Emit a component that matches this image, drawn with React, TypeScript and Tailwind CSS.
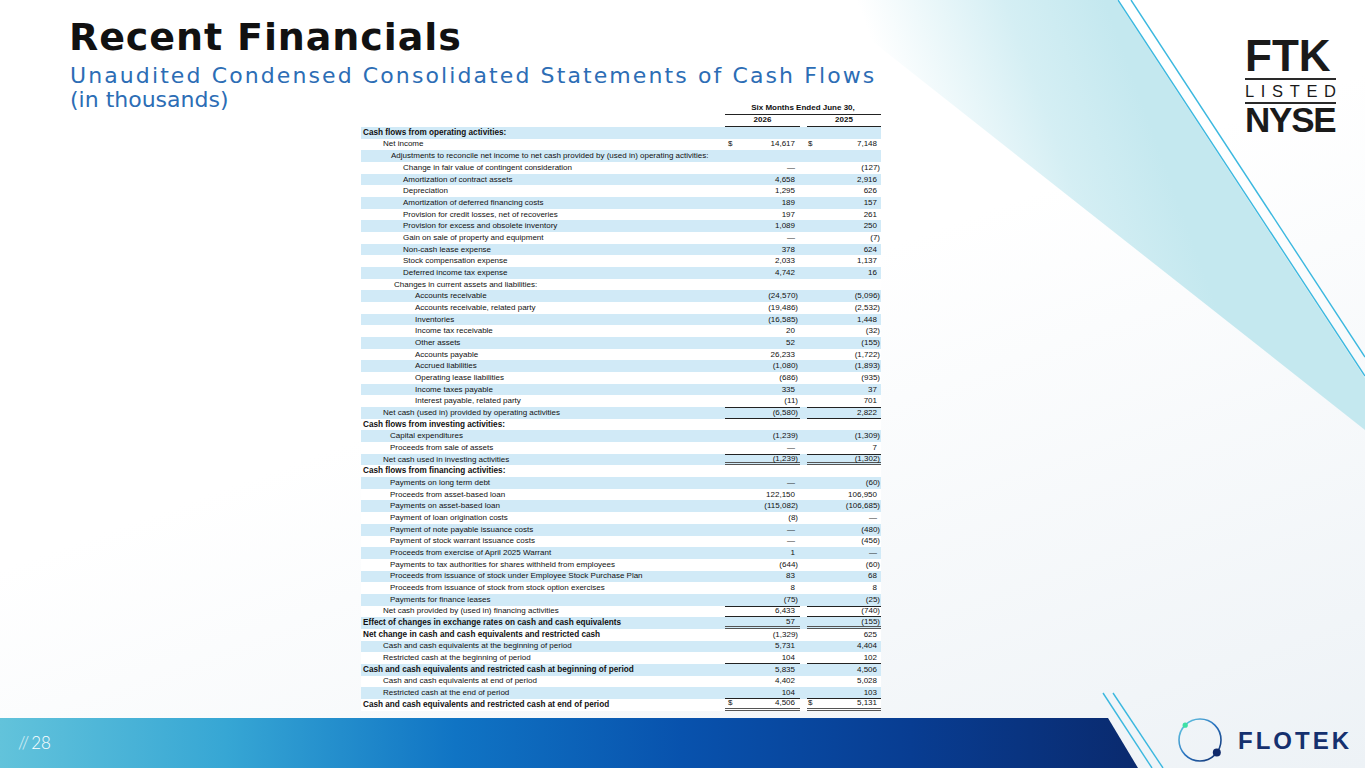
import React from "react";

type R = {
  l: string;
  i: number;
  b?: boolean;
  a?: string;
  c?: string;
  d?: boolean;
  t?: boolean;
  bb?: 1 | 2;
};

const IND: Record<number, string> = {
  0: "pl-[2px]",
  1: "pl-[22px]",
  2: "pl-[29px]",
  3: "pl-[30px]",
  4: "pl-[33px]",
  5: "pl-[42px]",
  6: "pl-[54px]",
};

const D = "—";

const rows: R[] = [
  { l: "Cash flows from operating activities:", i: 0, b: true },
  { l: "Net income", i: 1, a: "14,617", c: "7,148", d: true },
  { l: "Adjustments to reconcile net income to net cash provided by (used in) operating activities:", i: 3 },
  { l: "Change in fair value of contingent consideration", i: 5, a: D, c: "(127)" },
  { l: "Amortization of contract assets", i: 5, a: "4,658", c: "2,916" },
  { l: "Depreciation", i: 5, a: "1,295", c: "626" },
  { l: "Amortization of deferred financing costs", i: 5, a: "189", c: "157" },
  { l: "Provision for credit losses, net of recoveries", i: 5, a: "197", c: "261" },
  { l: "Provision for excess and obsolete inventory", i: 5, a: "1,089", c: "250" },
  { l: "Gain on sale of property and equipment", i: 5, a: D, c: "(7)" },
  { l: "Non-cash lease expense", i: 5, a: "378", c: "624" },
  { l: "Stock compensation expense", i: 5, a: "2,033", c: "1,137" },
  { l: "Deferred income tax expense", i: 5, a: "4,742", c: "16" },
  { l: "Changes in current assets and liabilities:", i: 4 },
  { l: "Accounts receivable", i: 6, a: "(24,570)", c: "(5,096)" },
  { l: "Accounts receivable, related party", i: 6, a: "(19,486)", c: "(2,532)" },
  { l: "Inventories", i: 6, a: "(16,585)", c: "1,448" },
  { l: "Income tax receivable", i: 6, a: "20", c: "(32)" },
  { l: "Other assets", i: 6, a: "52", c: "(155)" },
  { l: "Accounts payable", i: 6, a: "26,233", c: "(1,722)" },
  { l: "Accrued liabilities", i: 6, a: "(1,080)", c: "(1,893)" },
  { l: "Operating lease liabilities", i: 6, a: "(686)", c: "(935)" },
  { l: "Income taxes payable", i: 6, a: "335", c: "37" },
  { l: "Interest payable, related party", i: 6, a: "(11)", c: "701" },
  { l: "Net cash (used in) provided by operating activities", i: 1, a: "(6,580)", c: "2,822", t: true, bb: 1 },
  { l: "Cash flows from investing activities:", i: 0, b: true },
  { l: "Capital expenditures", i: 2, a: "(1,239)", c: "(1,309)" },
  { l: "Proceeds from sale of assets", i: 2, a: D, c: "7" },
  { l: "Net cash used in investing activities", i: 1, a: "(1,239)", c: "(1,302)", t: true, bb: 2 },
  { l: "Cash flows from financing activities:", i: 0, b: true },
  { l: "Payments on long term debt", i: 2, a: D, c: "(60)" },
  { l: "Proceeds from asset-based loan", i: 2, a: "122,150", c: "106,950" },
  { l: "Payments on asset-based loan", i: 2, a: "(115,082)", c: "(106,685)" },
  { l: "Payment of loan origination costs", i: 2, a: "(8)", c: D },
  { l: "Payment of note payable issuance costs", i: 2, a: D, c: "(480)" },
  { l: "Payment of stock warrant issuance costs", i: 2, a: D, c: "(456)" },
  { l: "Proceeds from exercise of April 2025 Warrant", i: 2, a: "1", c: D },
  { l: "Payments to tax authorities for shares withheld from employees", i: 2, a: "(644)", c: "(60)" },
  { l: "Proceeds from issuance of stock under Employee Stock Purchase Plan", i: 2, a: "83", c: "68" },
  { l: "Proceeds from issuance of stock from stock option exercises", i: 2, a: "8", c: "8" },
  { l: "Payments for finance leases", i: 2, a: "(75)", c: "(25)" },
  { l: "Net cash provided by (used in) financing activities", i: 1, a: "6,433", c: "(740)", t: true, bb: 1 },
  { l: "Effect of changes in exchange rates on cash and cash equivalents", i: 0, b: true, a: "57", c: "(155)", bb: 2 },
  { l: "Net change in cash and cash equivalents and restricted cash", i: 0, b: true, a: "(1,329)", c: "625" },
  { l: "Cash and cash equivalents at the beginning of period", i: 1, a: "5,731", c: "4,404" },
  { l: "Restricted cash at the beginning of period", i: 1, a: "104", c: "102", bb: 1 },
  { l: "Cash and cash equivalents and restricted cash at beginning of period", i: 0, b: true, a: "5,835", c: "4,506" },
  { l: "Cash and cash equivalents at end of period", i: 1, a: "4,402", c: "5,028" },
  { l: "Restricted cash at the end of period", i: 1, a: "104", c: "103", bb: 1 },
  { l: "Cash and cash equivalents and restricted cash at end of period", i: 0, b: true, a: "4,506", c: "5,131", d: true, bb: 2 },
];

function Val({ v, d, col, top, bot }: { v?: string; d?: boolean; col: 1 | 2; top?: boolean; bot?: 1 | 2 }) {
  const paren = !!v && v.startsWith("(");
  const base = col === 1 ? "w-[75px] pl-[3px]" : "w-[74px] pl-[1px]";
  const pr = col === 1 ? (paren ? "pr-[2px]" : "pr-[5px]") : paren ? "pr-[1px]" : "pr-[4px]";
  const bt = top ? "border-t border-t-[#222]" : "";
  const bbc = bot === 1 ? "border-b border-b-[#222]" : bot === 2 ? "border-b-[3px] border-double border-b-[#555]" : "";
  return (
    <div className={`flex h-full shrink-0 items-center justify-between ${base} ${pr} ${bt} ${bbc}`}>
      <span>{d ? "$" : ""}</span>
      <span>{v ?? ""}</span>
    </div>
  );
}

function Table() {
  return (
    <div className="w-[520px] bg-white text-[8px] leading-[10px] text-[#111] [font-family:'Liberation_Sans',Arial,sans-serif]">
      <div className="flex h-[12px]">
        <div className="w-[364px] shrink-0" />
        <div className="flex w-[156px] items-end justify-center border-b border-b-[#222] pb-[1px] font-bold">
          Six Months Ended June 30,
        </div>
      </div>
      <div className="flex h-[12px]">
        <div className="w-[364px] shrink-0" />
        <div className="flex w-[75px] items-end justify-center border-b border-b-[#222] pb-[1px] font-bold">2026</div>
        <div className="w-[7px]" />
        <div className="flex w-[74px] items-end justify-center border-b border-b-[#222] pb-[1px] font-bold">2025</div>
      </div>
      {rows.map((r, idx) => (
        <div key={idx} className={`flex h-[11.68px] ${idx % 2 === 0 ? "bg-[#d1eaf7]" : "bg-white"}`}>
          <div
            className={`flex w-[364px] shrink-0 items-center whitespace-nowrap ${IND[r.i]} ${
              r.b ? "text-[8.2px] font-bold" : ""
            }`}
          >
            {r.l}
          </div>
          <Val v={r.a} d={r.d} col={1} top={r.t} bot={r.bb} />
          <div className="w-[7px] shrink-0" />
          <Val v={r.c} d={r.d} col={2} top={r.t} bot={r.bb} />
        </div>
      ))}
    </div>
  );
}

function Background() {
  return (
    <svg className="pointer-events-none absolute inset-0" width="1365" height="768" viewBox="0 0 1365 768">
      <defs>
        <linearGradient id="cy" gradientUnits="userSpaceOnUse" x1="900" y1="120" x2="1120" y2="40">
          <stop offset="0" stopColor="#c6e9f0" stopOpacity="0" />
          <stop offset="0.6" stopColor="#c6e9f0" stopOpacity="0.75" />
          <stop offset="1" stopColor="#c4e8ef" stopOpacity="1" />
        </linearGradient>
      </defs>
      <polygon points="820,0 1117,0 1365,378 1365,430" fill="url(#cy)" />
      <line x1="1118" y1="0" x2="1365" y2="376" stroke="#3bb8df" strokeWidth="1.4" />
      <line x1="1131" y1="0" x2="1365" y2="357" stroke="#3bb8df" strokeWidth="1.4" />
      <line x1="1103" y1="693" x2="1152" y2="768" stroke="#3bb8df" strokeWidth="1.4" />
      <line x1="1113" y1="693" x2="1163" y2="768" stroke="#3bb8df" strokeWidth="1.4" />
    </svg>
  );
}

function FtkLogo() {
  return (
    <div className="mt-[34px] w-[91px] text-[#1a1a1a] [font-family:'Liberation_Sans',Arial,sans-serif]">
      <div className="h-[44px] text-[44px] font-bold leading-[44px]">FTK</div>
      <div className="h-[2px] bg-[#2a2a2a]" />
      <div className="mt-[3px] flex h-[16.5px] justify-between text-[16.5px] leading-[16.5px]">
        <span>L</span>
        <span>I</span>
        <span>S</span>
        <span>T</span>
        <span>E</span>
        <span>D</span>
      </div>
      <div className="mt-[2.5px] h-[2px] bg-[#2a2a2a]" />
      <div className="text-[35px] font-bold leading-[32px] tracking-[-1.2px]">NYSE</div>
    </div>
  );
}

function FlotekLogo() {
  return (
    <div className="flex items-start pl-[38px]">
      <svg width="48" height="48" viewBox="0 0 48 48">
        <defs>
          <linearGradient id="ring" x1="0" y1="0" x2="1" y2="1">
            <stop offset="0" stopColor="#6fd6e8" />
            <stop offset="0.5" stopColor="#2a73c0" />
            <stop offset="1" stopColor="#0f2a66" />
          </linearGradient>
        </defs>
        <circle cx="24" cy="22" r="21" fill="none" stroke="url(#ring)" strokeWidth="1.6" />
        <circle cx="9.2" cy="7.2" r="2.6" fill="#3ee0a6" />
        <circle cx="40.8" cy="34.6" r="4" fill="#10296a" />
      </svg>
      <div className="ml-[14px] mt-[10.7px] text-[24px] font-bold leading-[24px] tracking-[3px] text-[#15306e] [font-family:'Liberation_Sans',Arial,sans-serif]">
        FLOTEK
      </div>
    </div>
  );
}

export default function App() {
  return (
    <div className="relative flex h-[768px] w-[1365px] flex-col overflow-hidden bg-[linear-gradient(160deg,#ffffff_0%,#ffffff_45%,#edf2f6_100%)]">
      <Background />
      <div className="relative flex h-[718px] shrink-0">
        <div className="flex flex-1 flex-col">
          <h1 className="mt-[16.5px] pl-[69px] text-[38px] font-bold leading-[40px] tracking-[0.9px] text-[#111] [font-family:'DejaVu_Sans',sans-serif]">
            Recent Financials
          </h1>
          <p className="mt-[7.9px] pl-[70px] text-[22px] leading-[24px] tracking-[2.1px] text-[#2c6db5] [font-family:'DejaVu_Sans',sans-serif]">
            Unaudited Condensed Consolidated Statements of Cash Flows
          </p>
          <div className="flex items-start">
            <div className="w-[361px] shrink-0 pl-[70px] text-[22px] leading-[24px] text-[#2c6db5] [font-family:'DejaVu_Sans',sans-serif]">
              (in thousands)
            </div>
            <div className="mt-[14.6px]">
              <Table />
            </div>
          </div>
        </div>
        <div className="w-[120px] shrink-0">
          <FtkLogo />
        </div>
      </div>
      <div className="relative flex h-[50px] shrink-0">
        <div className="flex h-full w-[1138px] shrink-0 items-center pl-[18px] bg-[linear-gradient(90deg,#62c3db_0%,#36a6d4_20%,#1074c4_40%,#0852ad_60%,#083d92_80%,#0a2a6e_100%)] [clip-path:polygon(0_0,1108px_0,1138px_100%,0_100%)]">
          <span className="text-[17px] font-light leading-[20px] text-white/80 [font-family:Lato,sans-serif]">//</span>
          <span className="ml-[2px] text-[17px] font-light leading-[20px] text-white [font-family:Lato,sans-serif]">28</span>
        </div>
        <FlotekLogo />
      </div>
    </div>
  );
}
